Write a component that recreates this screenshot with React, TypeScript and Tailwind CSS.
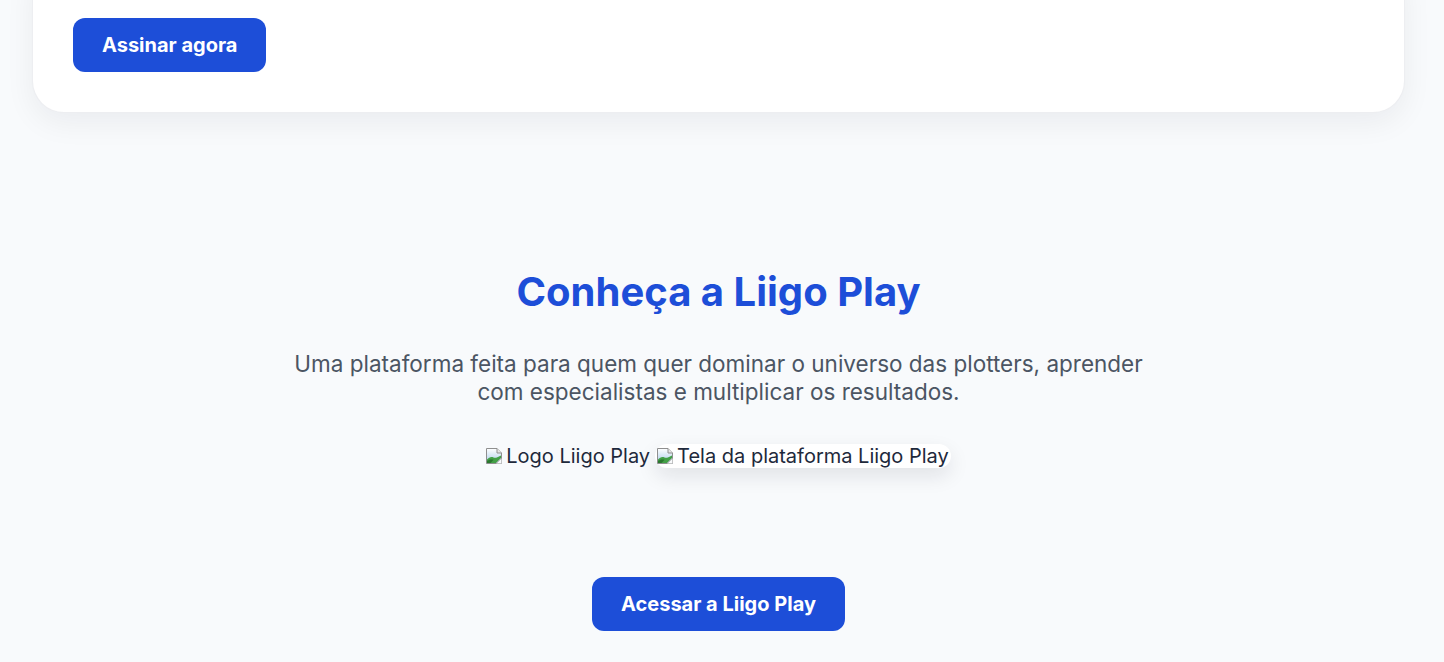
import React from "react";

function BrokenIcon() {
  return (
    <svg width="16" height="16" viewBox="0 0 16 16" className="shrink-0 mr-[4px] block">
      <defs>
        <linearGradient id="sky" x1="0" y1="0" x2="0" y2="1">
          <stop offset="0" stopColor="#ffffff" />
          <stop offset="1" stopColor="#a9cbe9" />
        </linearGradient>
      </defs>
      <path d="M0.5 0.5h10.5l4.5 4.5v10.5h-15z" fill="url(#sky)" stroke="#8f8f8f" strokeWidth="1" />
      <path d="M11 0.5v4.5h4.5" fill="#e6e6e6" stroke="#8f8f8f" strokeWidth="1" />
      <path d="M1 15V11.5C3 9.5 5 8.5 7.5 9.5 9.5 10.3 11 9.5 15 7.5V10L10 15z" fill="#43a047" />
      <path d="M1 15V13C3 11.5 5 11 7.5 11.8L4.5 15z" fill="#1b5e20" opacity="0.6" />
      <path d="M10 15.5L15.5 10V15.5z" fill="#f8fafc" />
      <path d="M10 15.5L15.5 10" stroke="#8f8f8f" strokeWidth="0.9" />
    </svg>
  );
}

export default function App() {
  return (
    <div
      className="min-h-screen bg-[#f8fafc] pr-[7px] overflow-hidden"
      style={{ fontFamily: "Inter, 'Noto Sans', sans-serif" }}
    >
      <div className="px-8">
        <div className="-mt-[41px] rounded-[32px] bg-white border border-gray-200/70 shadow-[0_10px_30px_rgba(15,23,42,0.06)] px-10 pt-[58px] pb-10">
          <button className="rounded-xl bg-[#1d4ed8] px-[29px] py-[13px] text-[20px] font-bold leading-7 text-white">
            Assinar agora
          </button>
        </div>
      </div>

      <section className="flex flex-col items-center pt-[155px] text-center">
        <h2 className="text-[40px] font-bold leading-[48px] text-[#1d4ed8]">
          Conheça a Liigo Play
        </h2>
        <p className="mt-[34px] max-w-[900px] text-[22.5px] leading-7 text-[#4b5563]">
          Uma plataforma feita para quem quer dominar o universo das plotters, aprender
          <br />
          com especialistas e multiplicar os resultados.
        </p>
        <div className="mt-[38px] flex items-center gap-[5px] text-xl leading-6 text-[#1e293b]">
          <span className="inline-flex items-center">
            <BrokenIcon />
            <span>Logo Liigo Play</span>
          </span>
          <span className="inline-flex items-center rounded-xl bg-white pl-[2px] pr-[2px] shadow-[0_8px_20px_rgba(15,23,42,0.10)]">
            <BrokenIcon />
            <span>Tela da plataforma Liigo Play</span>
          </span>
        </div>
        <button className="mt-[109px] rounded-xl bg-[#1d4ed8] px-[29px] py-[13px] text-[20px] font-bold leading-7 text-white">
          Acessar a Liigo Play
        </button>
      </section>
    </div>
  );
}
